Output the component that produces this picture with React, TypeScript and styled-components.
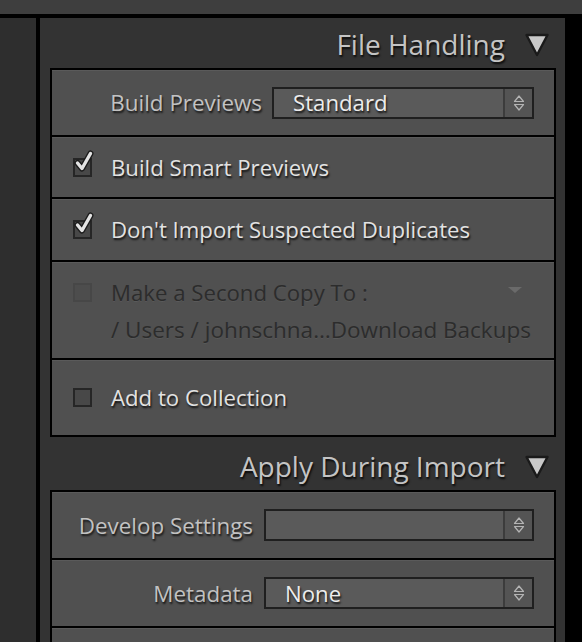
import React from "react";
import styled, { createGlobalStyle } from "styled-components";

const Global = createGlobalStyle`
  html, body { margin: 0; padding: 0; background: #000; }
  body { width: 582px; height: 642px; overflow: hidden; font-family: "Open Sans", "Noto Sans", sans-serif; }
  * { box-sizing: border-box; }
`;

const Page = styled.div`
  display: flex;
  flex-direction: column;
  width: 582px;
  height: 642px;
  background: #000;
`;

const TopBar = styled.div`
  flex: none;
  height: 18px;
  background: #3e3e3e;
  border-bottom: 4px solid #000;
`;

const Body = styled.div`
  flex: 1;
  display: flex;
  min-height: 0;
`;

const LeftPanel = styled.div`
  flex: none;
  width: 40px;
  background: #2e2e2e;
  border-right: 4px solid #000;
`;

const Main = styled.div`
  flex: 1;
  min-width: 0;
  background: #333;
  padding: 0 9px 0 10px;
  display: flex;
  flex-direction: column;
  overflow: hidden;
`;

const RightEdge = styled.div`
  flex: none;
  width: 17px;
  background: #000;
`;

const SectionHeader = styled.div<{ $h: number; $pt: number }>`
  flex: none;
  height: ${(p) => p.$h}px;
  padding-top: ${(p) => p.$pt}px;
  padding-right: 6px;
  display: flex;
  align-items: center;
  justify-content: flex-end;
  gap: 19px;
`;

const Title = styled.span`
  font-size: 28px;
  color: #c4c4c4;
  text-shadow: 1px 2px 2px rgba(0, 0, 0, 0.85);
  line-height: 1;
`;

const Group = styled.div`
  flex: none;
  display: flex;
  flex-direction: column;
  gap: 2px;
  background: #000;
  border: 2px solid #000;
`;

const Row = styled.div<{ $h: number }>`
  height: ${(p) => p.$h}px;
  background: #505050;
  box-shadow: inset 0 1px 0 #5a5a5a;
  display: flex;
  align-items: center;
  flex: none;
`;

const FieldRow = styled(Row)`
  padding-right: 20px;
`;

const CheckRow = styled(Row)`
  padding-left: 21px;
  gap: 19px;
`;

const CopyRow = styled(Row)`
  flex-direction: column;
  align-items: stretch;
  justify-content: flex-start;
  padding: 18px 0 0 21px;
  gap: 13px;
`;

const CopyLine = styled.div`
  display: flex;
  align-items: center;
  gap: 19px;
  height: 24px;
`;

const PathLine = styled.div`
  display: flex;
  align-items: center;
  height: 24px;
  padding-left: 38px;
`;

const Label = styled.span<{ $w: number }>`
  flex: none;
  width: ${(p) => p.$w}px;
  text-align: right;
  font-size: 22.4px;
  color: #c2c2c2;
  text-shadow: 1px 2px 2px rgba(0, 0, 0, 0.75);
  white-space: nowrap;
`;

const CheckText = styled.span<{ $dim?: boolean }>`
  font-size: 22.2px;
  white-space: nowrap;
  color: ${(p) => (p.$dim ? "#2c2c2c" : "#e2e2e2")};
  text-shadow: ${(p) =>
    p.$dim ? "0 1px 0 rgba(255,255,255,0.06)" : "1px 2px 2px rgba(0,0,0,0.8)"};
`;

const PathText = styled(CheckText)`
  font-size: 22.5px;
`;

const Spacer = styled.div`
  flex: 1;
`;

const SmallArrow = styled.svg`
  flex: none;
  margin-right: 31px;
  margin-top: -4px;
`;

const Select = styled.div<{ $gap: number }>`
  flex: 1;
  margin-left: ${(p) => p.$gap}px;
  height: 32px;
  border: 2px solid #1f1f1f;
  background: #5a5a5a;
  display: flex;
  align-items: stretch;
`;

const SelectValue = styled.span`
  flex: 1;
  padding-left: 19px;
  display: flex;
  align-items: center;
  font-size: 22.2px;
  color: #ececec;
  text-shadow: 1px 2px 2px rgba(0, 0, 0, 0.8);
  white-space: nowrap;
`;

const Stepper = styled.div`
  flex: none;
  width: 29px;
  border-left: 2px solid #3c3c3c;
  background: #545454;
  display: flex;
  align-items: center;
  justify-content: center;
`;

const BoxWrap = styled.div`
  position: relative;
  flex: none;
  width: 19px;
  height: 19px;
`;

const Box = styled.div<{ $dim?: boolean }>`
  width: 19px;
  height: 19px;
  border: 2px solid ${(p) => (p.$dim ? "#474747" : "#262626")};
  background: ${(p) => (p.$dim ? "#4d4d4d" : "#484848")};
`;

const Tick = styled.svg`
  position: absolute;
  left: 1px;
  top: -8px;
  overflow: visible;
`;

const HeaderTriangle = () => (
  <svg width="26" height="25" viewBox="0 0 26 25">
    <polygon points="2.5,3 23.5,3 13,23" fill="#c8c8c8" stroke="#1a1a1a" strokeWidth="2.4" strokeLinejoin="round" />
  </svg>
);

const StepperIcon = () => (
  <svg width="12" height="18" viewBox="0 0 12 18">
    <path d="M1.5 7.5 L6 2 L10.5 7.5 Z" fill="none" stroke="#b4b4b4" strokeWidth="1.2" strokeLinejoin="round" />
    <path d="M1.5 10.5 L6 16 L10.5 10.5 Z" fill="none" stroke="#b4b4b4" strokeWidth="1.2" strokeLinejoin="round" />
  </svg>
);

const Checkbox = ({ checked, dim }: { checked?: boolean; dim?: boolean }) => (
  <BoxWrap>
    <Box $dim={dim} />
    {checked && (
      <Tick width="21" height="23" viewBox="0 0 21 23">
        <path d="M3.5 13 L8 18.5 L16.5 3.5" fill="none" stroke="#1c1c1c" strokeWidth="6" strokeLinecap="round" strokeLinejoin="round" />
        <path d="M3.5 13 L8 18.5 L16.5 3.5" fill="none" stroke="#e4e4e4" strokeWidth="3.4" strokeLinecap="round" strokeLinejoin="round" />
      </Tick>
    )}
  </BoxWrap>
);

const SelectField = ({ value, gap }: { value: string; gap: number }) => (
  <Select $gap={gap}>
    <SelectValue>{value}</SelectValue>
    <Stepper>
      <StepperIcon />
    </Stepper>
  </Select>
);

export default function App() {
  return (
    <>
      <Global />
      <Page>
        <TopBar />
        <Body>
          <LeftPanel />
          <Main>
            <SectionHeader $h={50} $pt={2}>
              <Title>File Handling</Title>
              <HeaderTriangle />
            </SectionHeader>
            <Group>
              <FieldRow $h={65}>
                <Label $w={210}>Build Previews</Label>
                <SelectField value="Standard" gap={10} />
              </FieldRow>
              <CheckRow $h={60}>
                <Checkbox checked />
                <CheckText>Build Smart Previews</CheckText>
              </CheckRow>
              <CheckRow $h={61}>
                <Checkbox checked />
                <CheckText>Don't Import Suspected Duplicates</CheckText>
              </CheckRow>
              <CopyRow $h={96}>
                <CopyLine>
                  <Checkbox dim />
                  <CheckText $dim>Make a Second Copy To :</CheckText>
                  <Spacer />
                  <SmallArrow width="16" height="8" viewBox="0 0 16 8">
                    <polygon points="1,1 15,1 8,7" fill="#6a6a6a" />
                  </SmallArrow>
                </CopyLine>
                <PathLine>
                  <PathText $dim>/ Users / johnschna…Download Backups</PathText>
                </PathLine>
              </CopyRow>
              <CheckRow $h={75}>
                <Checkbox />
                <CheckText>Add to Collection</CheckText>
              </CheckRow>
            </Group>
            <SectionHeader $h={53} $pt={5}>
              <Title>Apply During Import</Title>
              <HeaderTriangle />
            </SectionHeader>
            <Group>
              <FieldRow $h={66}>
                <Label $w={201}>Develop Settings</Label>
                <SelectField value="" gap={11} />
              </FieldRow>
              <FieldRow $h={66}>
                <Label $w={201}>Metadata</Label>
                <SelectField value="None" gap={11} />
              </FieldRow>
              <Row $h={66} />
            </Group>
          </Main>
          <RightEdge />
        </Body>
      </Page>
    </>
  );
}
